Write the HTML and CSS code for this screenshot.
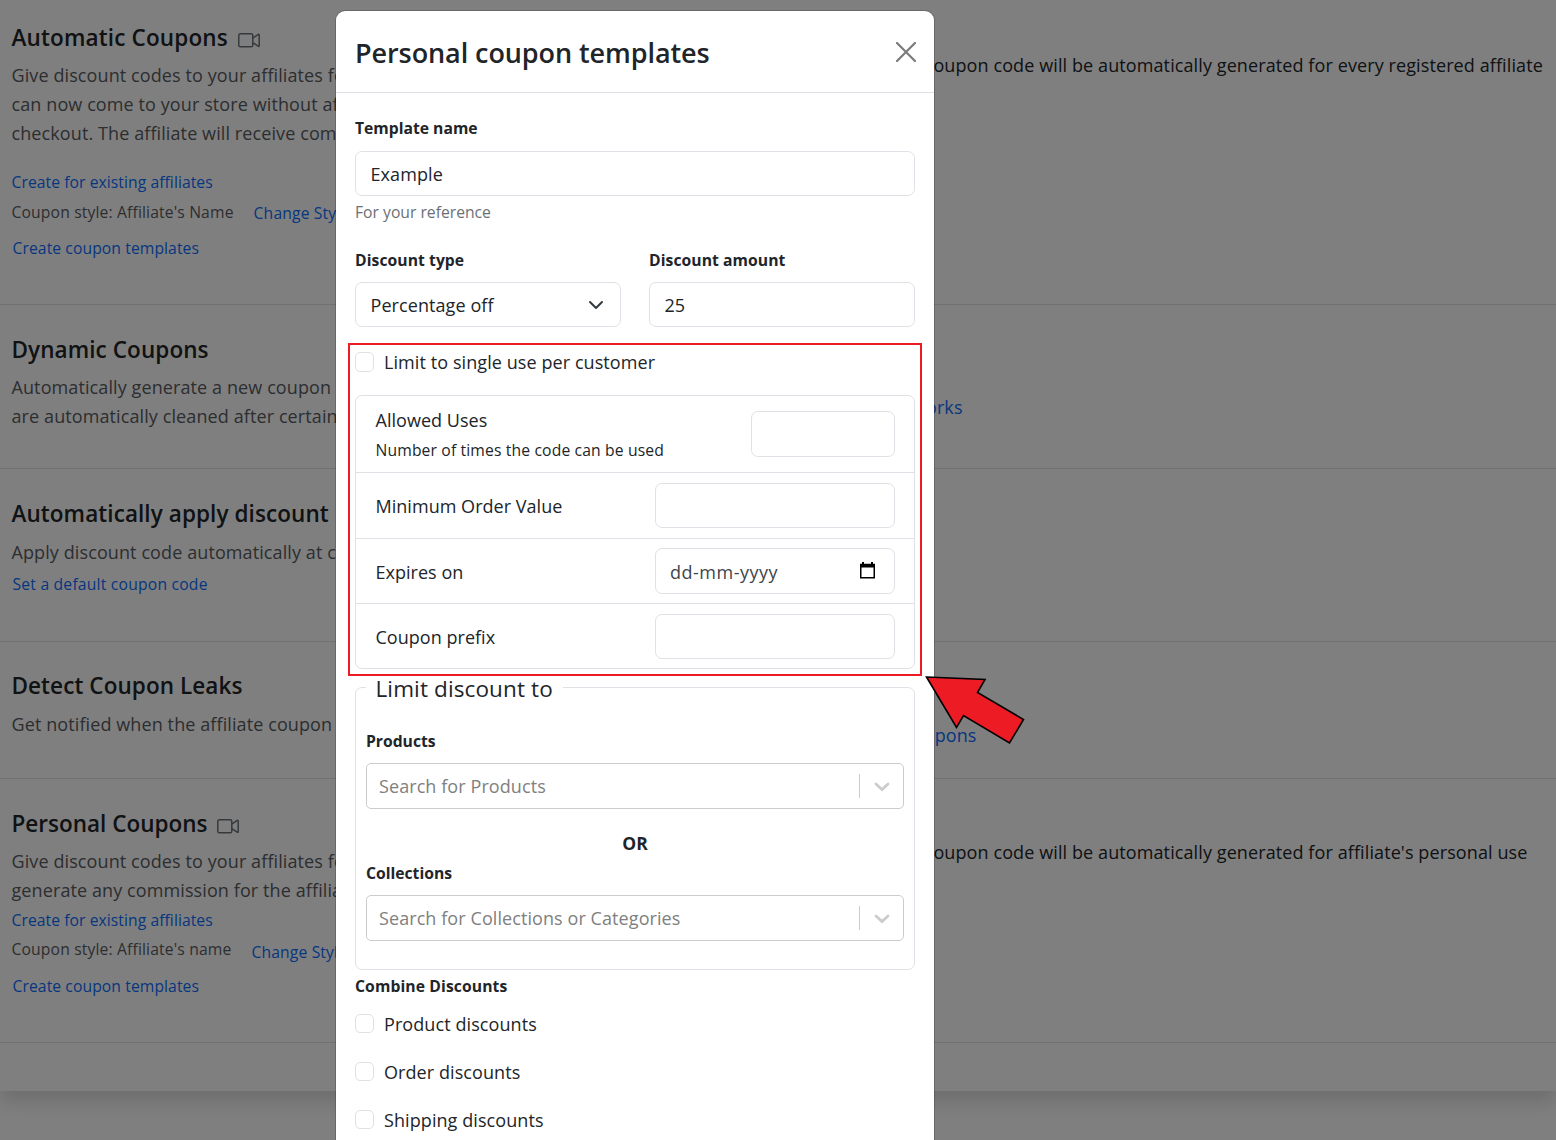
FILE: index.html
```html
<!DOCTYPE html>
<html lang="en">
<head>
<meta charset="utf-8">
<title>Personal coupon templates</title>
<link rel="stylesheet" href="styles.css">
</head>
<body>
<main class="settings">
  <section class="row row-auto">
    <div class="info">
      <h2 class="heading">Automatic Coupons <svg class="cam" viewBox="0 0 22 15"><rect x=".8" y=".8" width="14" height="13" rx="1.6"/><path d="M14.8 5.2 20.2 1.4Q21.2 1 21.2 2V12.8Q21.2 13.8 20.2 13.2L14.8 9.6"/></svg></h2>
      <p class="para">Give discount codes to your affiliates for<br>can now come to your store without aff<br>checkout. The affiliate will receive comm</p>
      <a class="link gap-l">Create for existing affiliates</a>
      <div class="style-line"><span>Coupon style: Affiliate's Name</span><a class="link">Change Style</a></div>
      <a class="link templates">Create coupon templates</a>
    </div>
    <div class="side side-auto"><p class="side-text">Coupon code will be automatically generated for every registered affiliate</p></div>
  </section>
  <section class="row row-dynamic">
    <div class="info">
      <h2 class="heading">Dynamic Coupons</h2>
      <p class="para">Automatically generate a new coupon<br>are automatically cleaned after certain</p>
    </div>
    <div class="side side-dynamic"><a class="side-link works">works</a></div>
  </section>
  <section class="row row-apply">
    <div class="info">
      <h2 class="heading">Automatically apply discount</h2>
      <p class="para">Apply discount code automatically at ch</p>
      <a class="link default">Set a default coupon code</a>
    </div>
    <div class="side"></div>
  </section>
  <section class="row row-leaks">
    <div class="info">
      <h2 class="heading">Detect Coupon Leaks</h2>
      <p class="para">Get notified when the affiliate coupon</p>
    </div>
    <div class="side side-leaks"><a class="side-link leaks">coupons</a></div>
  </section>
  <section class="row row-personal">
    <div class="info">
      <h2 class="heading">Personal Coupons <svg class="cam" viewBox="0 0 22 15"><rect x=".8" y=".8" width="14" height="13" rx="1.6"/><path d="M14.8 5.2 20.2 1.4Q21.2 1 21.2 2V12.8Q21.2 13.8 20.2 13.2L14.8 9.6"/></svg></h2>
      <p class="para">Give discount codes to your affiliates for<br>generate any commission for the affiliate</p>
      <a class="link gap-s">Create for existing affiliates</a>
      <div class="style-line"><span>Coupon style: Affiliate's name</span><a class="link">Change Style</a></div>
      <a class="link templates">Create coupon templates</a>
    </div>
    <div class="side side-personal"><p class="side-text">Coupon code will be automatically generated for affiliate's personal use</p></div>
  </section>
</main>
<div class="backdrop"></div>

<div class="modal">
  <header class="modal-head">
    <h1 class="title">Personal coupon templates</h1>
    <svg class="close" viewBox="0 0 20 20"><path d="M1 1 19 19M19 1 1 19"/></svg>
  </header>
  <div class="modal-body">
    <div class="label">Template name</div>
    <div class="input">Example</div>
    <div class="hint">For your reference</div>
    <div class="pair">
      <div>
        <div class="label">Discount type</div>
        <div class="input select">Percentage off<svg class="chev" viewBox="0 0 16 16"><path d="m2 5 6 6 6-6"/></svg></div>
      </div>
      <div>
        <div class="label">Discount amount</div>
        <div class="input">25</div>
      </div>
    </div>
    <div class="check limit"><i class="box"></i><span>Limit to single use per customer</span></div>
    <div class="group">
      <div class="item uses"><div><div class="item-name">Allowed Uses</div><div class="item-note">Number of times the code can be used</div></div><div class="input short"></div></div>
      <div class="item order"><div class="item-name">Minimum Order Value</div><div class="input field"></div></div>
      <div class="item expires"><div class="item-name">Expires on</div><div class="input field date">dd-mm-yyyy<svg class="cal" viewBox="0 0 15 17"><path d="M0 1.7h2V0h2v1.7h7V0h2v1.7h2V16.5H0zM1.5 5.5V15h12V5.5z" fill-rule="evenodd"/></svg></div></div>
      <div class="item prefix"><div class="item-name">Coupon prefix</div><div class="input field"></div></div>
    </div>
    <div class="fieldset">
      <div class="legend">Limit discount to</div>
      <div class="label">Products</div>
      <div class="search"><span>Search for Products</span><i class="sep"></i><svg class="drop" viewBox="0 0 16 10"><path d="m2 2 6 5.5L14 2"/></svg></div>
      <div class="or">OR</div>
      <div class="label">Collections</div>
      <div class="search"><span>Search for Collections or Categories</span><i class="sep"></i><svg class="drop" viewBox="0 0 16 10"><path d="m2 2 6 5.5L14 2"/></svg></div>
    </div>
    <div class="label combine">Combine Discounts</div>
    <div class="check"><i class="box"></i><span>Product discounts</span></div>
    <div class="check"><i class="box"></i><span>Order discounts</span></div>
    <div class="check last"><i class="box"></i><span>Shipping discounts</span></div>
  </div>
</div>

<div class="highlight"></div>
<svg class="arrow" viewBox="0 0 104 74"><path d="M3.500 4 62 6.500 54.500 19.500 100.500 46.500 86.500 70 40.500 42.500 33.500 54.500Z"/></svg>
</body>
</html>
```
FILE: styles.css
```css
* { box-sizing: border-box; }
html, body { height: 100%; }
body {
  margin: 0;
  overflow: hidden;
  position: relative;
  background: #fff;
  color: #212529;
  font-family: "Open Sans", "Noto Sans", sans-serif;
  font-size: 18px;
  line-height: 29px;
  letter-spacing: .08px;
}
h1, h2, p { margin: 0; }
svg { display: block; fill: none; flex: none; }
i { display: block; flex: none; }

.settings { height: 1091px; background: #fff; box-shadow: 0 10px 19px rgba(0, 0, 0, .15); }
.row {
  display: grid;
  grid-template-columns: 912px 1fr;
  border-bottom: 1px solid #dee2e6;
  white-space: nowrap;
}
.row-auto { height: 305px; padding-top: 24px; }
.row-dynamic { height: 164px; padding-top: 31px; }
.row-apply { height: 173px; padding-top: 31px; }
.row-leaks { height: 137px; padding-top: 30px; }
.row-personal { height: 264px; padding-top: 31px; }
.info { padding-left: 11.500px; }
.heading {
  display: flex;
  align-items: center;
  gap: 10px;
  height: 28px;
  margin-bottom: 9px;
  font-size: 22.500px;
  line-height: 28px;
  font-weight: 600;
}
.row-apply .heading, .row-leaks .heading { margin-bottom: 10px; }
.row-auto .heading { letter-spacing: .15px; }
.row-personal .heading { letter-spacing: 0; }
.cam { width: 22px; height: 15px; margin-top: 5px; stroke: #6c757d; stroke-width: 1.5; }
.para { color: #595c5f; letter-spacing: .1px; }
.link { display: block; font-size: 15.700px; line-height: 24px; color: #0d6efd; }
.gap-l { margin-top: 22px; letter-spacing: .06px; }
.gap-s { margin-top: 3px; letter-spacing: .06px; }
.style-line { display: flex; gap: 20px; margin-top: 6px; font-size: 15.700px; line-height: 24px; letter-spacing: .14px; color: #595c5f; }
.style-line .link { padding-top: 1px; }
.row-personal .style-line { height: 25px; margin-top: 5px; }
.row-personal .style-line .link { padding-top: 3px; }
.templates { margin: 11px 0 0 1px; }
.row-personal .templates { margin-top: 12px; }
.default { margin: 5px 0 0 1px; letter-spacing: .2px; }
.side-text { color: #212529; letter-spacing: .1px; }
.side-auto { padding-top: 27px; padding-left: 10px; }
.side-personal { padding-top: 28px; padding-left: 10px; }
.side-link { display: block; text-align: right; color: #0d6efd; }
.side-dynamic { padding-top: 57px; }
.side-leaks { padding-top: 49px; }
.works { width: 48px; }
.leaks { width: 64px; }
.backdrop { position: absolute; inset: 0; background: rgba(0, 0, 0, .5); }

.modal {
  position: absolute;
  left: 335px;
  top: 10px;
  width: 600px;
  height: 1130px;
  overflow: hidden;
  background: #fff;
  background-clip: padding-box;
  border: 1px solid rgba(0, 0, 0, .175);
  border-bottom: 0;
  border-radius: 10px 10px 0 0;
}
.modal-head {
  display: flex;
  align-items: center;
  justify-content: space-between;
  height: 82px;
  padding: 0 19px;
  border-bottom: 1px solid #dee2e6;
}
.title { padding-top: 2px; font-size: 27px; line-height: 40px; font-weight: 600; letter-spacing: -.08px; }
.close { width: 20px; height: 20px; margin-right: -.5px; stroke: #7b7b7b; stroke-width: 2.200; stroke-linecap: round; }
.modal-body { padding: 22px 19px 0; }
.label { height: 36px; font-size: 15.700px; line-height: 26px; font-weight: 700; letter-spacing: 0; }
.input {
  display: flex;
  align-items: center;
  justify-content: space-between;
  height: 45px;
  padding: 2px 15px 0 14.500px;
  border: 1px solid #dee2e6;
  border-radius: 7px;
  background: #fff;
}
.hint { margin-top: 4px; font-size: 15.700px; line-height: 25px; letter-spacing: 0; color: #6c7074; }
.pair { display: grid; grid-template-columns: 1fr 1fr; gap: 28px; margin-top: 21px; }
.pair .label { padding-top: 1px; letter-spacing: .06px; }
.chev { width: 16px; height: 16px; margin: -2px 1px 0 0; stroke: #343a40; stroke-width: 2; stroke-linecap: round; stroke-linejoin: round; }
.check { display: flex; align-items: center; gap: 10px; height: 29px; margin-bottom: 19px; }
.check.last { align-items: flex-start; height: 26px; margin-bottom: 0; }
.box { width: 19px; height: 19px; border: 1px solid #dee2e6; border-radius: 5px; margin-top: -2px; }
.last .box { margin-top: 4px; }
.limit { margin: 20px 0 19px; }
.limit .box { height: 20px; margin-top: 0; }
.limit span { padding-top: 2px; }
.group { height: 274px; border: 1px solid #dee2e6; border-radius: 7px; }
.item { display: flex; align-items: center; justify-content: space-between; padding: 0 19px 0 19.500px; border-bottom: 1px solid #dee2e6; }
.item-name { padding-top: 2px; letter-spacing: .03px; }
.uses { height: 77px; }
.item-note { padding-top: 1px; font-size: 15.700px; letter-spacing: .14px; }
.short { width: 144px; height: 46px; }
.field { width: 240px; }
.order { height: 66px; }
.expires { height: 65px; }
.prefix { height: 65px; border-bottom: 0; }
.date { height: 46px; padding: 2px 19px 0 14px; color: #40454a; letter-spacing: .5px; }
.cal { width: 15px; height: 17px; fill: #000; margin-top: -3px; }
.fieldset { height: 283px; margin-top: 18px; padding: 0 10px; border: 1px solid #dee2e6; border-radius: 7px; }
.legend {
  width: 197px;
  height: 30px;
  margin: -14px 0 24px;
  padding-left: 9.500px;
  background: #fff;
  font-size: 22.500px;
  line-height: 30px;
  letter-spacing: .12px;
}
.fieldset .label { height: 35px; }
.search { display: flex; align-items: center; height: 46px; padding: 0 13px 0 12px; border: 1px solid #ccc; border-radius: 5px; color: #808080; }
.search span { flex: 1; }
.sep { width: 1px; height: 24px; margin-right: 14px; background: #ccc; }
.drop { width: 16px; height: 10px; margin-top: 1px; stroke: #ccc; stroke-width: 2.800; stroke-linecap: round; }
.or { height: 51px; padding-top: 20px; font-size: 17.500px; font-weight: 700; text-align: center; }
.combine { height: 37px; margin-top: 3px; letter-spacing: .1px; }
.side-link.works { width: 49px; padding-right: 2px; }
.side-link.leaks { padding: 0; margin-left: -8px; width: 73px; padding-right: 1px; }

.highlight { position: absolute; left: 348px; top: 343px; width: 574px; height: 333px; border: 2px solid #ed1c24; }
.arrow { position: absolute; left: 923px; top: 673px; width: 104px; height: 74px; }
.arrow path { fill: #ed1c24; stroke: #000; stroke-width: 1.600; }
```
